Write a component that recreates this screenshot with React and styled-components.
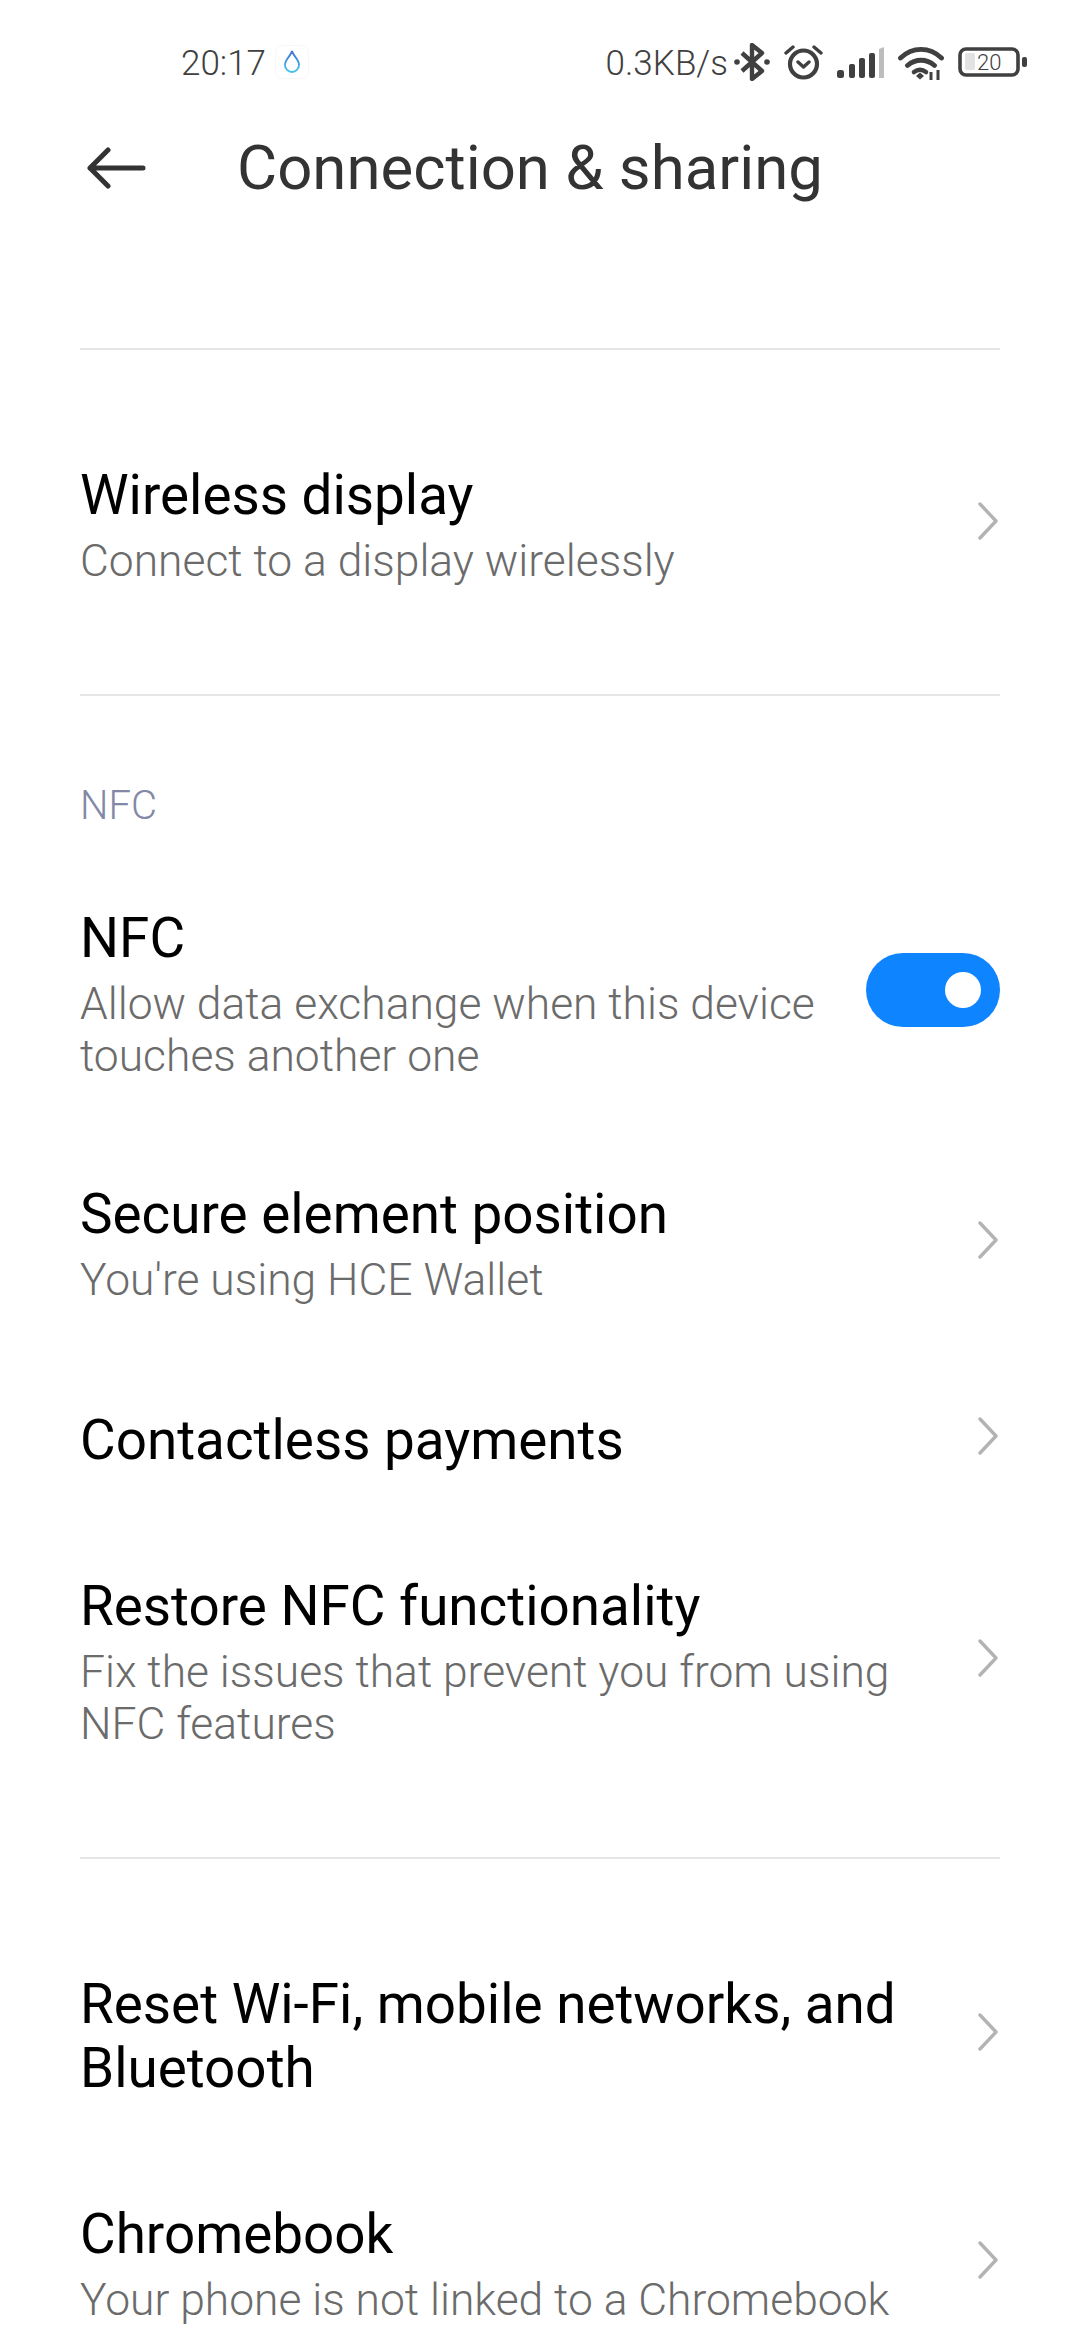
import styled, { createGlobalStyle } from 'styled-components';

const GlobalStyle = createGlobalStyle`
  html, body {
    margin: 0;
    padding: 0;
    background: #fff;
  }
  body {
    width: 1080px;
    height: 2340px;
    overflow: hidden;
    font-family: Roboto, "Noto Sans", sans-serif;
  }
`;

const Page = styled.div`
  width: 1080px;
  height: 2340px;
  overflow: hidden;
  background: #fff;
`;

const StatusBar = styled.div`
  height: 64px;
  padding: 30px 53px 0 181px;
  display: flex;
  align-items: center;
  justify-content: space-between;
  color: #404040;
  font-size: 35px;
  font-weight: 300;
`;

const StatusLeft = styled.div`
  display: flex;
  align-items: center;
  gap: 9px;
`;

const StatusText = styled.span`
  padding-top: 2px;
  margin-right: ${(p) => p.$right || 0}px;
`;

const NotifyBox = styled.div`
  display: flex;
  align-items: center;
  justify-content: center;
  width: 32px;
  height: 32px;
  border: 1px solid #f7f7f7;
  border-radius: 7px;
`;

const StatusRight = styled.div`
  display: flex;
  align-items: center;
  gap: 14px;
`;

const Header = styled.header`
  display: flex;
  align-items: center;
  height: 80px;
  margin-top: 34px;
  padding-left: 86px;
`;

const HeaderTitle = styled.h1`
  margin: 0 0 0 89px;
  font-size: 61.7px;
  font-weight: 400;
  color: #333;
`;

const Divider = styled.div`
  height: 2px;
  margin: ${(p) => p.$top}px 80px 0;
  background: #e5e5e5;
`;

const Row = styled.div`
  display: flex;
  align-items: center;
  justify-content: space-between;
  margin-top: ${(p) => p.$top || 0}px;
  padding: 51px 80px 49px;
`;

const RowText = styled.div`
  width: 760px;
`;

const RowTitle = styled.div`
  font-size: 54.8px;
  line-height: 64px;
  color: #000;
  white-space: nowrap;
`;

const RowSub = styled.div`
  font-size: 44.4px;
  font-weight: 300;
  line-height: 52px;
  color: #6b6b6b;
  white-space: nowrap;

  ${RowTitle} + & {
    margin-top: 8px;
  }
`;

const SectionLabel = styled.div`
  margin: 88px 80px 0;
  font-size: 40px;
  font-weight: 300;
  line-height: 44px;
  color: #8388a6;
`;

const Trailing = styled.div`
  display: flex;
  margin-bottom: 8px;
  margin-right: ${(p) => p.$right || 0}px;
`;

const Toggle = styled.div`
  display: flex;
  align-items: center;
  justify-content: flex-end;
  box-sizing: border-box;
  width: 134px;
  height: 74px;
  padding-right: 19px;
  border-radius: 37px;
  background: #0f84ff;
`;

const Knob = styled.div`
  width: 36px;
  height: 36px;
  border-radius: 50%;
  background: #fff;
`;

const Chevron = () => (
  <Trailing $right={2}>
    <svg width="20" height="38" viewBox="0 0 20 38" fill="none">
      <path d="M2 2l16 17L2 36" stroke="#b3b3b3" strokeWidth="3.4" strokeLinecap="round" strokeLinejoin="round" />
    </svg>
  </Trailing>
);

const BackArrow = () => (
  <svg width="62" height="42" viewBox="0 0 62 42" fill="none">
    <path d="M57 21H4M22 3L4 21l18 18" stroke="#333" strokeWidth="5" strokeLinecap="round" strokeLinejoin="round" />
  </svg>
);

const Drop = () => (
  <svg width="18" height="24" viewBox="0 0 18 24" fill="none">
    <defs>
      <linearGradient id="drop" x1="0" y1="0" x2="0" y2="1">
        <stop offset="0" stopColor="#3f6fd0" />
        <stop offset="1" stopColor="#45c4ef" />
      </linearGradient>
    </defs>
    <path d="M9 1c1 5 7 8 7 14a7 7 0 0 1-14 0c0-6 6-9 7-14z" stroke="url(#drop)" strokeWidth="1.8" />
  </svg>
);

const Bluetooth = () => (
  <svg width="36" height="38" viewBox="0 0 36 38" fill="none">
    <path d="M8 10l20 18-10 8V2l10 8L8 28" stroke="#404040" strokeWidth="4.4" strokeLinejoin="round" />
    <circle cx="3" cy="19" r="2.8" fill="#404040" />
    <circle cx="33" cy="19" r="2.8" fill="#404040" />
  </svg>
);

const Alarm = () => (
  <svg width="39" height="36" viewBox="0 0 39 36" fill="none">
    <circle cx="19.5" cy="20" r="13.5" stroke="#404040" strokeWidth="4.2" />
    <path d="M14 18l5.5 5 5.5-5M2 9l7-6M37 9l-7-6" stroke="#404040" strokeWidth="3.4" strokeLinecap="round" strokeLinejoin="round" />
  </svg>
);

const Signal = () => (
  <svg width="47" height="31" viewBox="0 0 47 31" fill="none">
    <rect x="0" y="23" width="7" height="8" rx="2.5" fill="#404040" />
    <rect x="12" y="17" width="6" height="14" rx="2" fill="#404040" />
    <rect x="22" y="11" width="6" height="20" rx="2" fill="#404040" />
    <rect x="32" y="6" width="6" height="25" rx="2" fill="#404040" />
    <path d="M42 2l5-2v31h-5z" fill="#bdbdbd" />
  </svg>
);

const Wifi = () => (
  <svg width="46" height="35" viewBox="0 0 46 35" fill="none">
    <path d="M2.5 13c12-11.500 29-11.500 41 0M9.500 20.500c8-7 19-7 27 0" stroke="#404040" strokeWidth="4.8" strokeLinecap="round" />
    <path d="M16 27c4-3 8-3 12 0" stroke="#404040" strokeWidth="4.6" strokeLinecap="round" />
    <path d="M18 31l4-3.500 4 3.500-4 3.500z" fill="#404040" />
    <path d="M33 27v8M40 25v10" stroke="#404040" strokeWidth="3" />
  </svg>
);

const Battery = () => (
  <svg width="69" height="30" viewBox="0 0 69 30" fill="none">
    <rect x="2" y="2" width="58" height="26" rx="6" stroke="#404040" strokeWidth="3.6" />
    <rect x="7" y="6" width="10" height="17" rx="2" fill="#e2e2e2" />
    <rect x="64" y="10" width="5" height="10" rx="2" fill="#404040" />
    <text x="19" y="23" fontSize="22" fontWeight="300" fill="#404040" fontFamily="Roboto, sans-serif">20</text>
  </svg>
);

const App = () => (
  <Page>
    <GlobalStyle />
    <StatusBar>
      <StatusLeft>
        <StatusText>20:17</StatusText>
        <NotifyBox>
          <Drop />
        </NotifyBox>
      </StatusLeft>
      <StatusRight>
        <StatusText $right={-8}>0.3KB/s</StatusText>
        <Bluetooth />
        <Alarm />
        <Signal />
        <Wifi />
        <Battery />
      </StatusRight>
    </StatusBar>
    <Header>
      <BackArrow />
      <HeaderTitle>Connection &amp; sharing</HeaderTitle>
    </Header>
    <Divider $top={140} />
    <Row $top={62}>
      <RowText>
        <RowTitle>Wireless display</RowTitle>
        <RowSub>Connect to a display wirelessly</RowSub>
      </RowText>
      <Chevron />
    </Row>
    <Divider $top={58} />
    <SectionLabel>NFC</SectionLabel>
    <Row $top={27}>
      <RowText>
        <RowTitle>NFC</RowTitle>
        <RowSub>Allow data exchange when this device</RowSub>
        <RowSub>touches another one</RowSub>
      </RowText>
      <Trailing>
        <Toggle>
          <Knob />
        </Toggle>
      </Trailing>
    </Row>
    <Row>
      <RowText>
        <RowTitle>Secure element position</RowTitle>
        <RowSub>You're using HCE Wallet</RowSub>
      </RowText>
      <Chevron />
    </Row>
    <Row $top={2}>
      <RowText>
        <RowTitle>Contactless payments</RowTitle>
      </RowText>
      <Chevron />
    </Row>
    <Row $top={2}>
      <RowText>
        <RowTitle>Restore NFC functionality</RowTitle>
        <RowSub>Fix the issues that prevent you from using</RowSub>
        <RowSub>NFC features</RowSub>
      </RowText>
      <Chevron />
    </Row>
    <Divider $top={58} />
    <Row $top={62}>
      <RowText>
        <RowTitle>Reset Wi-Fi, mobile networks, and</RowTitle>
        <RowTitle>Bluetooth</RowTitle>
      </RowText>
      <Chevron />
    </Row>
    <Row $top={2}>
      <RowText>
        <RowTitle>Chromebook</RowTitle>
        <RowSub>Your phone is not linked to a Chromebook</RowSub>
      </RowText>
      <Chevron />
    </Row>
  </Page>
);

export default App;
